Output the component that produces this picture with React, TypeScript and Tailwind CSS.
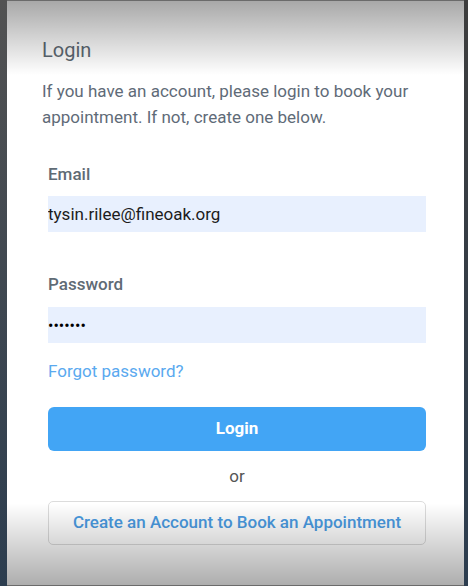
import React from "react";

export default function App() {
  return (
    <div
      className="flex h-[586px] w-[468px] overflow-hidden"
      style={{ fontFamily: "Roboto, 'Liberation Sans', sans-serif" }}
    >
      <div className="w-[7px] bg-gradient-to-b from-[#525252] to-[#2c3d4f]" />

      <div className="relative flex-1 border-y border-[#6b6b6b] bg-white">
        <div className="pl-[35px] pr-[38px] pt-[35px]">
          <h2 className="text-[20px] leading-[28px] font-normal text-[#5d6872]">Login</h2>
          <p className="mt-[14px] text-[17px] leading-[26px] text-[#5f6b78]">
            If you have an account, please login to book your appointment. If not, create one below.
          </p>

          <form className="ml-[6px] w-[378px]" onSubmit={(e) => e.preventDefault()}>
            <label className="mt-[32px] block text-[17px] leading-[24px] font-medium text-[#5f6b75]">
              Email
            </label>
            <input
              className="mt-[10px] block h-[36px] w-full bg-[#e8f0fe] text-[17px] text-[#1c1c1c] outline-none"
              defaultValue="tysin.rilee@fineoak.org"
            />

            <label className="mt-[40px] block text-[17px] leading-[24px] font-medium text-[#5f6b75]">
              Password
            </label>
            <input
              type="password"
              className="mt-[11px] block h-[36px] w-full bg-[#e8f0fe] text-[16px] text-black outline-none"
              defaultValue="1234567"
            />

            <a className="mt-[16px] block text-[17px] leading-[24px] text-[#5aa9ef]" href="#">
              Forgot password?
            </a>

            <button
              type="submit"
              className="mt-[24px] flex h-[44px] w-full items-center justify-center rounded-[6px] bg-[#42a5f5] text-[17px] font-bold text-white"
            >
              Login
            </button>

            <p className="mt-[13px] text-center text-[17px] leading-[24px] text-[#555]">or</p>

            <button
              type="button"
              className="mt-[13px] flex h-[44px] w-full items-center justify-center rounded-[5px] border border-[#dcdcdc] bg-white text-[17px] font-medium text-[#4a9be2]"
            >
              Create an Account to Book an Appointment
            </button>
          </form>
        </div>

        <div className="pointer-events-none absolute inset-x-0 top-0 h-[74px] bg-gradient-to-b from-black/[0.34] to-transparent" />
        <div className="pointer-events-none absolute inset-x-0 bottom-0 h-[82px] bg-gradient-to-t from-black/[0.32] to-transparent" />
      </div>

      <div className="w-[4px] bg-gradient-to-b from-[#3d3d3d] to-[#2c3d4f]" />
    </div>
  );
}
